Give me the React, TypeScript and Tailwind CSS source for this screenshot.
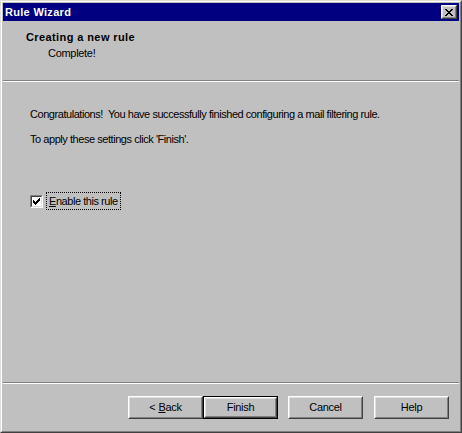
import React from 'react';

const font = { fontFamily: '"Liberation Sans", Arial, sans-serif' };

function CloseGlyph() {
    // classic 8x7 close cross, pixel rows
    const rows = ['xx....xx', '.xx..xx.', '..xxxx..', '...xx...', '..xxxx..', '.xx..xx.', 'xx....xx'];
    return (
        <svg width="8" height="7" viewBox="0 0 8 7" shapeRendering="crispEdges">
            {rows.map((row, y) =>
                row.split('').map((c, x) => (c === 'x' ? <rect key={`${x}-${y}`} x={x} y={y} width="1" height="1" fill="#000" /> : null))
            )}
        </svg>
    );
}

function CheckGlyph() {
    const rows = ['......x', '.....xx', 'x...xxx', 'xx.xxx.', 'xxxxx..', '.xxx...', '..x....'];
    return (
        <svg width="7" height="7" viewBox="0 0 7 7" shapeRendering="crispEdges">
            {rows.map((row, y) =>
                row.split('').map((c, x) => (c === 'x' ? <rect key={`${x}-${y}`} x={x} y={y} width="1" height="1" fill="#000" /> : null))
            )}
        </svg>
    );
}

function Button({ children, isDefault = false, className = '' }: { children: React.ReactNode; isDefault?: boolean; className?: string }) {
    return (
        <div className={`w-[75px] h-[23px] flex ${isDefault ? 'border border-black' : ''} ${className}`}>
            <div className="flex-1 flex border border-t-white border-l-white border-r-[#404040] border-b-[#404040]">
                <div className="flex-1 flex items-center justify-center border border-t-[#dfdfdf] border-l-[#dfdfdf] border-r-[#808080] border-b-[#808080] bg-[#c0c0c0] text-[11px] tracking-[-0.3px] text-black">
                    {children}
                </div>
            </div>
        </div>
    );
}

export default function App() {
    return (
        <div style={font} className="w-[462px] h-[433px] flex border border-t-[#dfdfdf] border-l-[#dfdfdf] border-r-[#404040] border-b-[#404040]">
            <div className="flex-1 flex flex-col p-px bg-[#c0c0c0] border border-t-white border-l-white border-r-[#808080] border-b-[#808080]">
                {/* title bar */}
                <div className="h-[18px] bg-[#000080] flex items-center justify-between pl-[2px] pr-[2px]">
                    <span className="text-white text-[11px] font-bold tracking-[0.3px] leading-none">Rule Wizard</span>
                    <div className="w-[16px] h-[14px] flex border border-t-white border-l-white border-r-[#404040] border-b-[#404040]">
                        <div className="flex-1 flex items-center justify-center bg-[#c0c0c0] border border-t-[#dfdfdf] border-l-[#dfdfdf] border-r-[#808080] border-b-[#808080]">
                            <CloseGlyph />
                        </div>
                    </div>
                </div>

                {/* header */}
                <div className="h-[59px] pt-[10px] pl-[23px] text-[11px] leading-[13px] text-black">
                    <div className="font-bold tracking-[0.4px]">Creating a new rule</div>
                    <div className="pl-[22px] mt-[3px] tracking-[-0.3px]">Complete!</div>
                </div>
                <div className="h-px bg-[#808080]" />
                <div className="h-px bg-white" />

                {/* body */}
                <div className="flex-1 pt-[26px] pl-[27px] text-[11px] leading-[13px] tracking-[-0.45px] text-black">
                    <div>Congratulations!&nbsp; You have successfully finished configuring a mail filtering rule.</div>
                    <div className="mt-[12px]">To apply these settings click 'Finish'.</div>
                    <div className="mt-[46px] flex items-center h-[18px]">
                        <div className="w-[13px] h-[13px] flex border border-t-[#808080] border-l-[#808080] border-r-white border-b-white">
                            <div className="flex-1 flex items-center justify-center bg-white border border-t-[#404040] border-l-[#404040] border-r-[#dfdfdf] border-b-[#dfdfdf]">
                                <CheckGlyph />
                            </div>
                        </div>
                        <div className="ml-[3px] h-[18px] flex items-center px-[2px] border border-dotted border-black">
                            <span><span className="underline">E</span>nable this rule</span>
                        </div>
                    </div>
                </div>

                {/* footer */}
                <div className="h-px bg-[#808080]" />
                <div className="h-px bg-white" />
                <div className="h-[46px] pt-[12px] pr-[10px] flex justify-end items-start">
                    <Button>&lt; <span className="underline ml-[3px]">B</span>ack</Button>
                    <Button isDefault>Finish</Button>
                    <Button className="ml-[10px]">Cancel</Button>
                    <Button className="ml-[11px]">Help</Button>
                </div>
            </div>
        </div>
    );
}
